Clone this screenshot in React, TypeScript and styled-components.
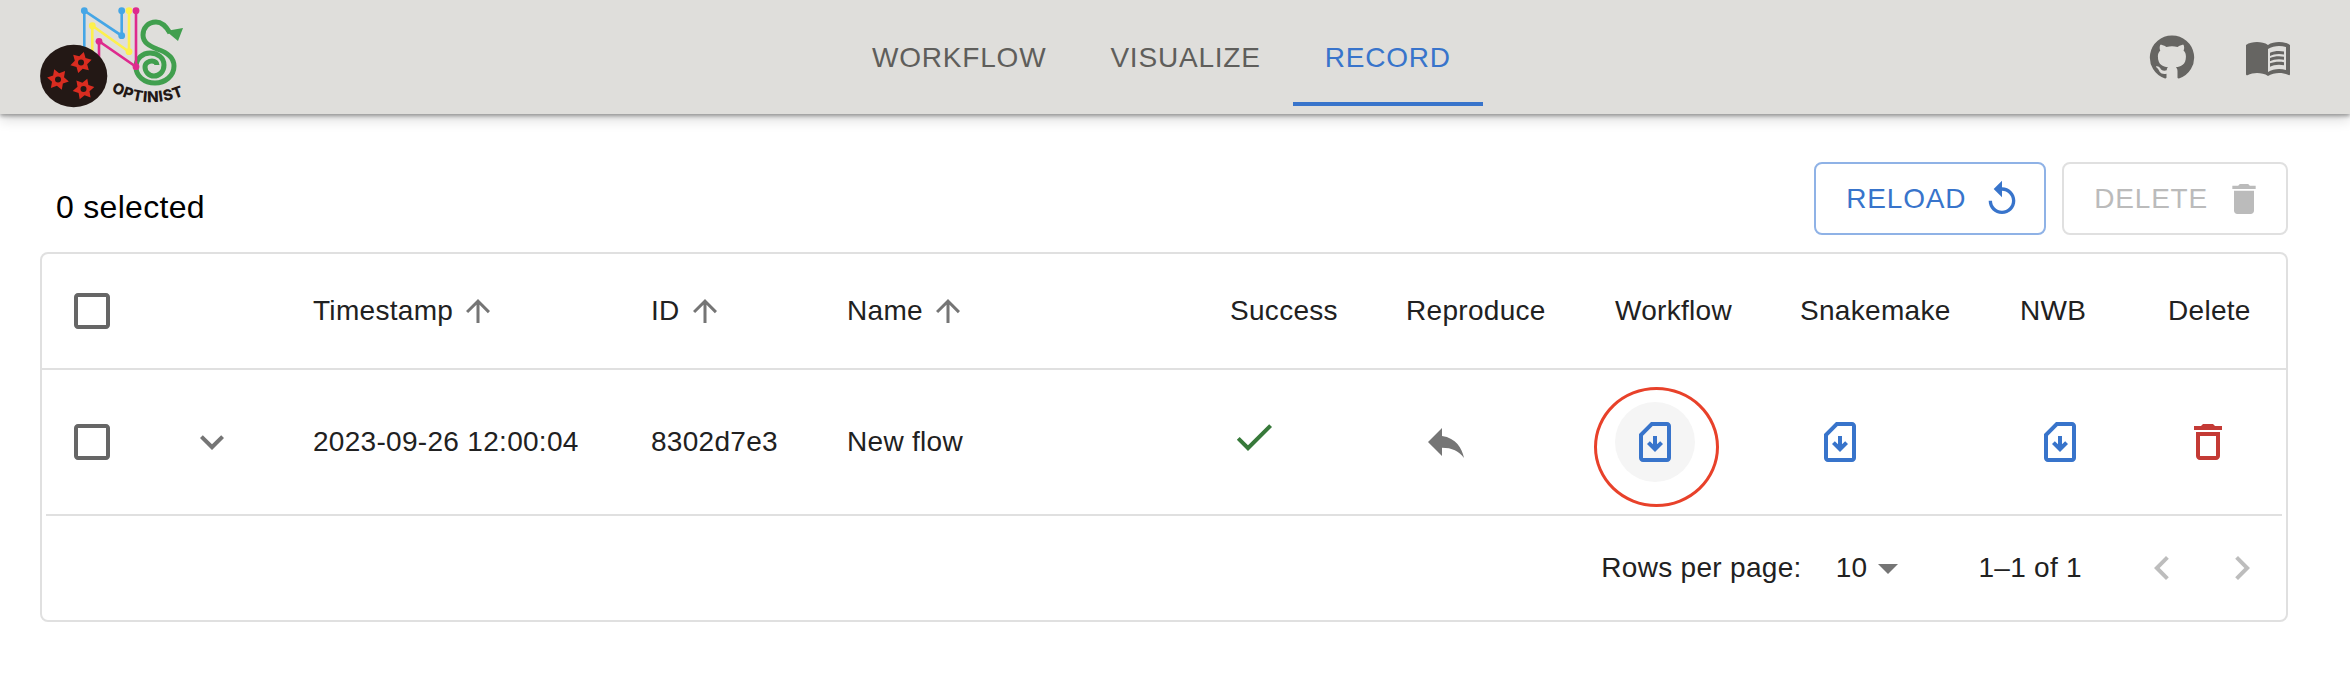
import React from 'react';
import styled, { createGlobalStyle } from 'styled-components';

const BLUE = '#3874cb';
const LINE = '#e0e0e0';
const TEXT = '#212121';
const GREY = '#757575';

const ICONS = {
	github:
		'M12 1.27a11 11 0 00-3.48 21.46c.55.09.73-.28.73-.55v-1.84c-3.03.64-3.67-1.46-3.67-1.46-.55-1.29-1.28-1.65-1.28-1.65-.92-.65.1-.65.1-.65 1.1 0 1.73 1.1 1.73 1.1.92 1.65 2.57 1.2 3.21.92a2 2 0 01.64-1.47c-2.47-.27-5.04-1.19-5.04-5.5 0-1.1.46-2.1 1.2-2.84a3.76 3.76 0 010-2.93s.91-.28 3.11 1.1c1.8-.49 3.7-.49 5.5 0 2.1-1.38 3.02-1.1 3.02-1.1a3.76 3.76 0 010 2.93c.83.74 1.2 1.74 1.2 2.94 0 4.21-2.57 5.13-5.04 5.4.45.37.82.92.82 2.02v3.03c0 .27.1.64.73.55A11 11 0 0012 1.27',
	book: 'M21 5c-1.11-.35-2.33-.5-3.5-.5-1.95 0-4.05.4-5.5 1.5-1.45-1.1-3.55-1.5-5.5-1.5S2.45 4.9 1 6v14.65c0 .25.25.5.5.5.1 0 .15-.05.25-.05C3.1 20.45 5.05 20 6.5 20c1.95 0 4.05.4 5.5 1.5 1.35-.85 3.8-1.5 5.5-1.5 1.65 0 3.35.3 4.75 1.05.1.05.15.05.25.05.25 0 .5-.25.5-.5V6c-.6-.45-1.25-.75-2-1zm0 13.5c-1.1-.35-2.3-.5-3.5-.5-1.7 0-4.15.65-5.5 1.5V8c1.35-.85 3.8-1.5 5.5-1.5 1.2 0 2.4.15 3.5.5v11.5zM17.5 10.5c.88 0 1.73.09 2.5.26V9.24c-.79-.15-1.64-.24-2.5-.24-1.7 0-3.24.29-4.5.83v1.66c1.13-.64 2.7-.99 4.5-.99zM13 12.49v1.66c1.13-.64 2.7-.99 4.5-.99.88 0 1.73.09 2.5.26V11.9c-.79-.15-1.64-.24-2.5-.24-1.7 0-3.24.3-4.5.83zm4.5 1.84c-1.7 0-3.24.29-4.5.83v1.66c1.13-.64 2.7-.99 4.5-.99.88 0 1.73.09 2.5.26v-1.52c-.79-.16-1.64-.24-2.5-.24z',
	replay: 'M12 5V1L7 6l5 5V7c3.31 0 6 2.69 6 6s-2.69 6-6 6-6-2.69-6-6H4c0 4.42 3.58 8 8 8s8-3.58 8-8-3.58-8-8-8z',
	trash: 'M6 19c0 1.1.9 2 2 2h8c1.1 0 2-.9 2-2V7H6v12zM19 4h-3.5l-1-1h-5l-1 1H5v2h14V4z',
	trashOutline: 'M6 19c0 1.1.9 2 2 2h8c1.1 0 2-.9 2-2V7H6v12zM8 9h8v10H8V9zm7.5-5l-1-1h-5l-1 1H5v2h14V4z',
	checkbox: 'M19 5v14H5V5h14m0-2H5c-1.1 0-2 .9-2 2v14c0 1.1.9 2 2 2h14c1.1 0 2-.9 2-2V5c0-1.1-.9-2-2-2z',
	arrowUp: 'M4 12l1.41 1.41L11 7.83V20h2V7.83l5.58 5.59L20 12l-8-8-8 8z',
	expand: 'M16.59 8.59 12 13.17 7.41 8.59 6 10l6 6 6-6z',
	check: 'M9 16.17 4.83 12l-1.42 1.41L9 19 21 7l-1.41-1.41z',
	reply: 'M10 9V5l-7 7 7 7v-4.1c5 0 8.5 1.6 11 5.1-1-5-4-10-11-11z',
	download:
		'M18 2h-8L4 8v12c0 1.1.9 2 2 2h12c1.1 0 2-.9 2-2V4c0-1.1-.9-2-2-2zm0 2v16H6V8.83L10.83 4H18zM16 13l-4 4-4-4 1.41-1.41L11 13.17V9.02L13 9v4.17l1.59-1.59L16 13z',
	dropDown: 'M7 10l5 5 5-5z',
	prev: 'M15.41 7.41 14 6l-6 6 6 6 1.41-1.41L10.83 12z',
	next: 'M10 6 8.59 7.41 13.17 12l-4.58 4.59L10 18l6-6z',
};

const COLUMNS = [
	{ label: 'Timestamp', sortable: true },
	{ label: 'ID', sortable: true },
	{ label: 'Name', sortable: true },
	{ label: 'Success' },
	{ label: 'Reproduce' },
	{ label: 'Workflow' },
	{ label: 'Snakemake' },
	{ label: 'NWB' },
	{ label: 'Delete' },
];

function Icon({ name, size = 48, color = GREY }: { name: keyof typeof ICONS; size?: number; color?: string }) {
	return (
		<IconSvg viewBox="0 0 24 24" $size={size} fill={color}>
			<path d={ICONS[name]} />
		</IconSvg>
	);
}

// 로고의 빨간 톱니 (6개 돌기)
function Gear({ x, y, turn }: { x: number; y: number; turn: number }) {
	const points = Array.from({ length: 12 }, (_, i) => {
		const radius = i % 2 === 0 ? 11 : 6.4;
		const angle = ((i * 30 + turn) * Math.PI) / 180;
		return `${(x + radius * Math.cos(angle)).toFixed(1)},${(y + radius * Math.sin(angle)).toFixed(1)}`;
	}).join(' ');
	return (
		<>
			<polygon points={points} fill="#d92c20" />
			<circle cx={x} cy={y} r={3} fill="#231815" />
		</>
	);
}

function Logo() {
	return (
		<LogoSvg viewBox="40 0 155 114">
			<path
				d="M170 33C166 26 161 22 156 22C148 22 143 28 143 35C143 43 150 46 157 49C166 52 174 57 174 66C174 76 165 83 155 83C144 83 136 76 136 67C136 58 143 53 150 53C158 53 164 58 164 65C164 72 159 76 154 76C149 76 145 72 145 67C145 63 149 61 152 61C155 61 157 63 157 65"
				fill="none"
				stroke="#419f4e"
				strokeWidth={5}
			/>
			<polygon points="166,31 183,28 178,41" fill="#419f4e" />
			<g fill="none" strokeWidth={2.6}>
				<path d="M84.3 50V10.7L121.7 35.7V10.7" stroke="#45a6e6" />
				<path d="M92.3 52V25.7L129 51.7V10.7" stroke="#fdf04d" />
				<path d="M99 58V41.3L136 66.7V10.7" stroke="#de2a8e" />
			</g>
			<g fill="#45a6e6">
				<circle cx={84.3} cy={10.7} r={3.4} />
				<circle cx={121.7} cy={10.7} r={3.4} />
				<circle cx={121.7} cy={35.7} r={3.4} />
			</g>
			<g fill="#fdf04d">
				<circle cx={129} cy={10.7} r={3.4} />
				<circle cx={129} cy={51.7} r={3.4} />
				<circle cx={92.3} cy={25.7} r={3.4} />
			</g>
			<g fill="#de2a8e">
				<circle cx={136} cy={10.7} r={3.4} />
				<circle cx={136} cy={66.7} r={3.4} />
				<circle cx={99} cy={41.3} r={3.4} />
			</g>
			<ellipse cx={73.7} cy={76} rx={33.6} ry={31.2} fill="#231815" />
			<Gear x={81} y={62.5} turn={-15} />
			<Gear x={58} y={79.5} turn={10} />
			<Gear x={83.5} y={89} turn={-10} />
			<path id="logo-curve" d="M111 91Q150 113 191 92" fill="none" />
			<LogoText>
				<textPath href="#logo-curve">OPTINIST</textPath>
			</LogoText>
		</LogoSvg>
	);
}

export default function App() {
	return (
		<>
			<GlobalStyle />
			<AppBar>
				<Logo />
				<Tabs>
					<Tab>WORKFLOW</Tab>
					<Tab>VISUALIZE</Tab>
					<Tab $active>RECORD</Tab>
				</Tabs>
				<BarIcons>
					<Icon name="github" color="#666562" />
					<Icon name="book" color="#666562" />
				</BarIcons>
			</AppBar>
			<Main>
				<ActionBar>
					<SelectedLabel>0 selected</SelectedLabel>
					<OutlineButton>
						RELOAD
						<ButtonIcon>
							<Icon name="replay" size={40} color={BLUE} />
						</ButtonIcon>
					</OutlineButton>
					<OutlineButton $disabled>
						DELETE
						<ButtonIcon>
							<Icon name="trash" size={40} color="#bbbbbb" />
						</ButtonIcon>
					</OutlineButton>
				</ActionBar>
				<Card>
					<HeaderRow>
						<CheckCell>
							<Icon name="checkbox" color="#666666" />
						</CheckCell>
						<span />
						{COLUMNS.map((column) => (
							<Cell key={column.label}>
								{column.label}
								{column.sortable && (
									<SortIcon>
										<Icon name="arrowUp" size={36} />
									</SortIcon>
								)}
							</Cell>
						))}
					</HeaderRow>
					<DataRow>
						<CheckCell>
							<Icon name="checkbox" color="#666666" />
						</CheckCell>
						<ExpandCell>
							<Icon name="expand" />
						</ExpandCell>
						<Cell>2023-09-26 12:00:04</Cell>
						<Cell>8302d7e3</Cell>
						<Cell>New flow</Cell>
						<Cell>
							<RaisedIcon>
								<Icon name="check" color="#37793a" />
							</RaisedIcon>
						</Cell>
						<Cell>
							<RoundButton>
								<Icon name="reply" />
							</RoundButton>
						</Cell>
						<Cell>
							<RoundButton $hovered>
								<Icon name="download" color={BLUE} />
								<Annotation />
							</RoundButton>
						</Cell>
						<Cell>
							<RoundButton>
								<Icon name="download" color={BLUE} />
							</RoundButton>
						</Cell>
						<Cell>
							<RoundButton>
								<Icon name="download" color={BLUE} />
							</RoundButton>
						</Cell>
						<Cell>
							<RoundButton>
								<Icon name="trashOutline" color="#c43a35" />
							</RoundButton>
						</Cell>
					</DataRow>
					<Footer>
						<span>Rows per page:</span>
						<PageSize>10</PageSize>
						<Icon name="dropDown" />
						<PageRange>1–1 of 1</PageRange>
						<PageButton>
							<Icon name="prev" color="#bdbdbd" />
						</PageButton>
						<PageButton>
							<Icon name="next" color="#bdbdbd" />
						</PageButton>
					</Footer>
				</Card>
			</Main>
		</>
	);
}

const GlobalStyle = createGlobalStyle`
	html, body {
		margin: 0;
		background: #ffffff;
		font-family: 'Liberation Sans', Arial, sans-serif;
		color: ${TEXT};
		overflow: hidden;
	}
`;

const IconSvg = styled.svg<{ $size: number }>`
	width: ${({ $size }) => $size}px;
	height: ${({ $size }) => $size}px;
	display: block;
	flex-shrink: 0;
`;

const LogoSvg = styled.svg`
	width: 155px;
	height: 114px;
	margin-left: 40px;
	flex-shrink: 0;
`;

const LogoText = styled.text`
	font: 800 15px Inter, 'Liberation Sans', sans-serif;
	letter-spacing: 0.6px;
	fill: #231815;
`;

const AppBar = styled.header`
	display: flex;
	height: 114px;
	background: #dfdedb;
	box-shadow: 0 2px 4px rgba(0, 0, 0, 0.35), 0 6px 12px rgba(0, 0, 0, 0.14);
`;

const Tabs = styled.nav`
	display: flex;
	align-self: flex-start;
	margin: 10px 0 0 645px;
`;

const Tab = styled.div<{ $active?: boolean }>`
	display: flex;
	align-items: center;
	height: 96px;
	box-sizing: border-box;
	padding: 0 32px;
	border-top: 4px solid transparent;
	border-bottom: 4px solid ${({ $active }) => ($active ? BLUE : 'transparent')};
	color: ${({ $active }) => ($active ? BLUE : '#5f5e5b')};
	font-size: 28px;
	letter-spacing: 0.8px;
`;

const BarIcons = styled.div`
	display: flex;
	align-items: center;
	gap: 48px;
	margin-left: auto;
	padding-right: 58px;
`;

const Main = styled.main`
	padding: 48px 62px 0 40px;
`;

const ActionBar = styled.div`
	display: flex;
	align-items: center;
	gap: 16px;
	margin-bottom: 17px;
`;

const SelectedLabel = styled.div`
	margin: 16px auto 0 16px;
	font-size: 32px;
	line-height: 48px;
	letter-spacing: 0.3px;
	color: #000000;
`;

const OutlineButton = styled.div<{ $disabled?: boolean }>`
	display: flex;
	align-items: center;
	height: 73px;
	box-sizing: border-box;
	padding: 0 22px 0 30px;
	border: 2px solid ${({ $disabled }) => ($disabled ? LINE : '#8fb2e6')};
	border-radius: 8px;
	color: ${({ $disabled }) => ($disabled ? '#bbbbbb' : BLUE)};
	font-size: 28px;
	letter-spacing: 0.8px;
`;

const ButtonIcon = styled.span`
	margin-left: 16px;
`;

const Card = styled.section`
	border: 2px solid ${LINE};
	border-radius: 8px;
	font-size: 28px;
	letter-spacing: 0.3px;
`;

const GridRow = styled.div`
	display: grid;
	grid-template-columns: 100px 151px 338px 196px 383px 176px 209px 185px 220px 148px 138px;
	align-items: center;
`;

const HeaderRow = styled(GridRow)`
	height: 114px;
	border-bottom: 2px solid ${LINE};
`;

const DataRow = styled(GridRow)`
	position: relative;
	height: 146px;
	padding-bottom: 2px;
	box-sizing: border-box;

	&::after {
		content: '';
		position: absolute;
		left: 4px;
		right: 4px;
		bottom: 0;
		height: 2px;
		background: ${LINE};
	}
`;

const CheckCell = styled.div`
	display: flex;
	justify-content: center;
`;

const ExpandCell = styled.div`
	display: flex;
	padding-left: 46px;
`;

const Cell = styled.div`
	display: flex;
	align-items: center;
	padding-left: 20px;
	white-space: nowrap;
`;

const SortIcon = styled.span`
	margin-left: 7px;
`;

const RaisedIcon = styled.span`
	margin-bottom: 10px;
`;

const RoundButton = styled.div<{ $hovered?: boolean }>`
	position: relative;
	display: flex;
	align-items: center;
	justify-content: center;
	width: 80px;
	height: 80px;
	border-radius: 50%;
	background: ${({ $hovered }) => ($hovered ? '#f5f5f5' : 'transparent')};
`;

// 스크린샷 위에 손으로 그린 빨간 강조 원
const Annotation = styled.span`
	position: absolute;
	left: -21px;
	top: -15px;
	width: 125px;
	height: 120px;
	box-sizing: border-box;
	border: 3px solid #e8412a;
	border-radius: 50%;
`;

const Footer = styled.div`
	display: flex;
	align-items: center;
	justify-content: flex-end;
	height: 104px;
	padding-right: 12px;
`;

const PageSize = styled.span`
	margin: 0 -3px 0 34px;
`;

const PageRange = styled.span`
	margin: 0 48px 0 66px;
`;

const PageButton = styled.div`
	padding: 8px;

	& + & {
		margin-left: 16px;
	}
`;
